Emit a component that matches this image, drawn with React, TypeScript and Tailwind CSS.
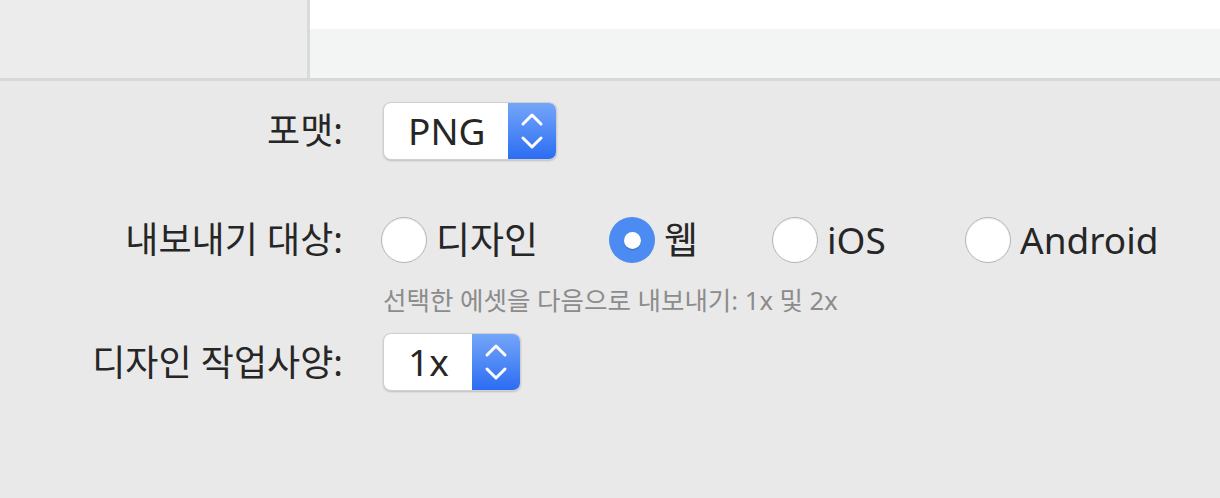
import React from "react";

const FONT = "font-['Noto_Sans','Noto_Sans_CJK_KR',sans-serif]";

function Chevrons() {
  return (
    <svg width="24" height="40" viewBox="0 0 24 40" fill="none">
      <path d="M3 13 L12 4 L21 13" stroke="white" strokeWidth="3" strokeLinecap="round" strokeLinejoin="round" />
      <path d="M3 27 L12 36 L21 27" stroke="white" strokeWidth="3" strokeLinecap="round" strokeLinejoin="round" />
    </svg>
  );
}

function PopupButton({ label, bodyWidth }: { label: string; bodyWidth: string }) {
  return (
    <div className="inline-flex h-[58px] overflow-hidden rounded-[8px] border border-[#cfcfcf] bg-white align-top shadow-[0_1px_2px_rgba(0,0,0,0.18)]">
      <div className={`flex items-center pl-[24px] text-[37px] text-[#262626] ${bodyWidth}`}>
        {label}
      </div>
      <div className="flex w-[48px] items-center justify-center bg-gradient-to-b from-[#74a5f8] to-[#2b6cf2]">
        <Chevrons />
      </div>
    </div>
  );
}

function Radio({ label, checked, width }: { label: string; checked?: boolean; width: string }) {
  return (
    <div className={`flex items-center gap-[9px] ${width}`}>
      {checked ? (
        <span className="flex h-[46px] w-[46px] items-center justify-center rounded-full bg-[#4b8bf2]">
          <span className="h-[17px] w-[17px] rounded-full bg-white shadow-[0_1px_1px_rgba(0,0,0,0.25)]" />
        </span>
      ) : (
        <span className="h-[46px] w-[46px] rounded-full border-[1.5px] border-[#b4b4b4] bg-white shadow-[inset_0_1px_1px_rgba(0,0,0,0.08)]" />
      )}
      <span className="text-[37px] text-[#262626]">{label}</span>
    </div>
  );
}

export default function App() {
  return (
    <div className={`flex h-[498px] w-[1220px] flex-col bg-[#e9e9e9] ${FONT}`}>
      <div className="flex h-[78px]">
        <div className="w-[307px] bg-[#ececec]" />
        <div className="w-[3px] bg-[#dadada]" />
        <div className="flex flex-1 flex-col">
          <div className="h-[29px] bg-white" />
          <div className="flex-1 bg-[#f3f4f4]" />
        </div>
      </div>
      <div className="h-[3px] bg-[#d8d8d8]" />

      <div className="grid grid-cols-[343px_1fr] gap-x-[40px] pt-[21px]">
        <div className="flex h-[58px] items-center justify-end text-[36px] text-[#262626]">포맷:</div>
        <div>
          <PopupButton label="PNG" bodyWidth="w-[124px]" />
        </div>

        <div className="mt-[57px] flex h-[46px] items-center justify-end text-[36px] text-[#262626]">
          내보내기 대상:
        </div>
        <div className="ml-[-2px] mt-[57px] flex h-[46px] items-center">
          <Radio label="디자인" width="w-[228px]" />
          <Radio label="웹" checked width="w-[163px]" />
          <Radio label="iOS" width="w-[193px]" />
          <Radio label="Android" width="w-auto" />
        </div>

        <div />
        <div className="mt-[22px] text-[25.5px] leading-[30px] text-[#8c8c8c]">
          선택한 에셋을 다음으로 내보내기: 1x 및 2x
        </div>

        <div className="mt-[18px] flex h-[59px] items-center justify-end text-[36px] text-[#262626]">
          디자인 작업사양:
        </div>
        <div className="mt-[18px]">
          <PopupButton label="1x" bodyWidth="w-[88px]" />
        </div>
      </div>
    </div>
  );
}
